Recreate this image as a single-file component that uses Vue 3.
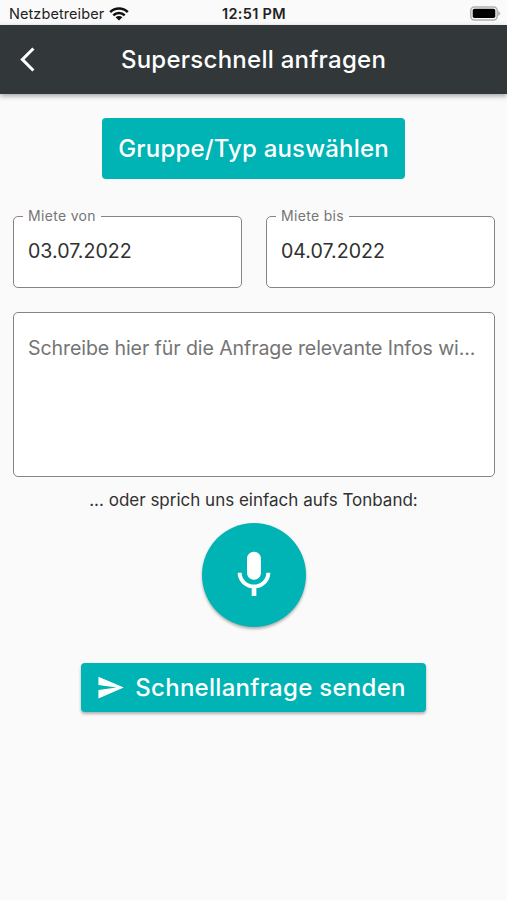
<template>
    <div class="screen">
        <div class="status-bar">
            <div class="carrier">
                <span>Netzbetreiber</span>
                <svg width="20" height="14" viewBox="0 0 20 14">
                    <path d="M1.2 5.1a12.6 12.6 0 0 1 17.6 0" />
                    <path d="M4.3 8.4a8.1 8.1 0 0 1 11.4 0" />
                    <path class="solid" d="M10 13.6 6.6 10.3a4.9 4.9 0 0 1 6.8 0z" />
                </svg>
            </div>

            <strong class="clock">12:51 PM</strong>

            <svg class="battery" width="31" height="15" viewBox="0 0 31 15">
                <rect class="shell" x=".8" y=".9" width="26.4" height="13" rx="3.6" />
                <rect x="2.7" y="2.8" width="22.6" height="9.2" rx="1.8" />
                <path class="cap" d="M28.2 5c2.6.8 2.6 4 0 4.8z" />
            </svg>
        </div>

        <header class="app-bar">
            <button type="button" class="back-button" aria-label="Zurück">
                <svg width="29" height="29" viewBox="0 0 24 24">
                    <path d="M17.77 3.77 16 2 6 12l10 10 1.77-1.77L9.54 12z" />
                </svg>
            </button>
            <h1>Superschnell anfragen</h1>
        </header>

        <main class="request-form">
            <button type="button" class="group-button">Gruppe/Typ auswählen</button>

            <div class="date-row">
                <fieldset v-for="field in dateFields"
                          :key="field.label"
                          class="date-field">
                    <legend>{{ field.label }}</legend>
                    <input v-model="field.value"
                           type="text"
                           :aria-label="field.label" />
                </fieldset>
            </div>

            <textarea v-model="message"
                      class="message"
                      placeholder="Schreibe hier für die Anfrage relevante Infos wi..."></textarea>

            <p class="hint">... oder sprich uns einfach aufs Tonband:</p>

            <button type="button" class="mic-button" aria-label="Aufnehmen">
                <svg width="56" height="56" viewBox="0 0 24 24">
                    <path d="M12 14c1.66 0 2.99-1.34 2.99-3L15 5c0-1.66-1.34-3-3-3S9 3.34 9 5v6c0 1.66 1.34 3 3 3zm5.3-3c0 3-2.54 5.1-5.3 5.1S6.7 14 6.7 11H5c0 3.41 2.72 6.23 6 6.72V21h2v-3.28c3.28-.48 6-3.3 6-6.72h-1.7z" />
                </svg>
            </button>

            <button type="button" class="send-button">
                <svg width="29" height="29" viewBox="0 0 24 24">
                    <path d="M2.01 21 23 12 2.01 3 2 10l15 2-15 2z" />
                </svg>
                <span>Schnellanfrage senden</span>
            </button>
        </main>
    </div>
</template>

<script setup>
import { ref } from "vue";

const dateFields = ref([
  { label: "Miete von", value: "03.07.2022" },
  { label: "Miete bis", value: "04.07.2022" },
]);

const message = ref("");
</script>

<style>
    body {
        margin: 0;
        background: #fafafa;
    }
</style>

<style scoped>
    .screen {
        min-height: 900px;
        background: #fafafa;
        color: #303030;
        font-family: Inter, "Liberation Sans", sans-serif;
    }

    button {
        display: flex;
        align-items: center;
        justify-content: center;
        border: none;
        padding: 0;
        color: white;
        font-family: inherit;
        cursor: pointer;
    }

        button svg {
            flex: none;
            fill: white;
        }

    .status-bar {
        height: 25px;
        display: grid;
        grid-template-columns: 1fr auto 1fr;
        align-items: center;
        box-sizing: border-box;
        padding: 2px 6px 0 9px;
        color: #222;
        font-size: 14.5px;
    }

    .carrier {
        display: flex;
        align-items: center;
        gap: 5px;
        letter-spacing: 0.08px;
    }

        .carrier path {
            fill: none;
            stroke: #111;
            stroke-width: 2.6;
        }

        .carrier .solid {
            fill: #111;
            stroke: none;
        }

    .clock {
        font-weight: 600;
        letter-spacing: 0.3px;
        margin-right: 2px;
    }

    .battery {
        justify-self: end;
    }

        .battery .shell {
            fill: none;
            stroke: #b0b0b0;
            stroke-width: 1.5;
        }

        .battery .cap {
            fill: #b0b0b0;
        }

    .app-bar {
        height: 69px;
        display: grid;
        grid-template-columns: 56px 1fr 56px;
        align-items: center;
        background: #32373a;
        box-shadow: 0 2px 5px rgba(0, 0, 0, 0.35);
    }

        .app-bar h1 {
            margin: 0;
            color: white;
            text-align: center;
            font-size: 24px;
            font-weight: 500;
            letter-spacing: 0.26px;
        }

    .back-button {
        height: 100%;
        padding-right: 1px;
        background: none;
    }

    .request-form {
        display: flex;
        flex-direction: column;
        align-items: center;
        padding: 24px 12px 0 13px;
    }

    .group-button {
        width: 303px;
        height: 61px;
        margin-right: 1px;
        border-radius: 4px;
        background: #00b3b5;
        font-size: 24px;
        font-weight: 500;
        letter-spacing: 0.18px;
    }

    .date-row {
        width: 100%;
        display: grid;
        grid-template-columns: 1fr 1fr;
        gap: 24px;
        margin-top: 29px;
    }

    .date-field {
        min-width: 0;
        height: 80px;
        box-sizing: border-box;
        margin: 0;
        padding: 0 14px;
        border: 1px solid #858585;
        border-radius: 5px;
        background: white;
    }

        .date-field legend {
            margin-left: -5px;
            padding: 0 5px;
            color: #757575;
            font-size: 14px;
            line-height: 16px;
            letter-spacing: 0.32px;
        }

        .date-field input {
            width: 100%;
            height: 28px;
            margin-top: 13px;
            padding: 0;
            border: none;
            background: none;
            color: #303030;
            font-family: inherit;
            font-size: 19.6px;
            outline: none;
        }

    .message {
        width: 100%;
        height: 165px;
        box-sizing: border-box;
        margin-top: 24px;
        padding: 21px 14px;
        border: 1px solid #858585;
        border-radius: 5px;
        background: white;
        font-family: inherit;
        font-size: 19.6px;
        line-height: 28px;
        letter-spacing: -0.11px;
        white-space: nowrap;
        overflow: hidden;
        resize: none;
        outline: none;
    }

        .message::placeholder {
            color: #757575;
        }

    .hint {
        margin: 11px 1px 10.5px 0;
        font-size: 17px;
        line-height: 24px;
    }

    .mic-button {
        width: 104px;
        height: 104px;
        border-radius: 50%;
        background: #00b3b5;
        box-shadow: 0 2px 3px rgba(0, 0, 0, 0.3);
    }

    .send-button {
        width: 345px;
        height: 49px;
        box-sizing: border-box;
        gap: 10px;
        margin: 36.5px 1px 0 0;
        padding-right: 5px;
        border-radius: 4px;
        background: #00b3b5;
        box-shadow: 0 2px 3px rgba(0, 0, 0, 0.3);
        font-size: 24px;
        font-weight: 500;
        letter-spacing: 0.28px;
    }
</style>
